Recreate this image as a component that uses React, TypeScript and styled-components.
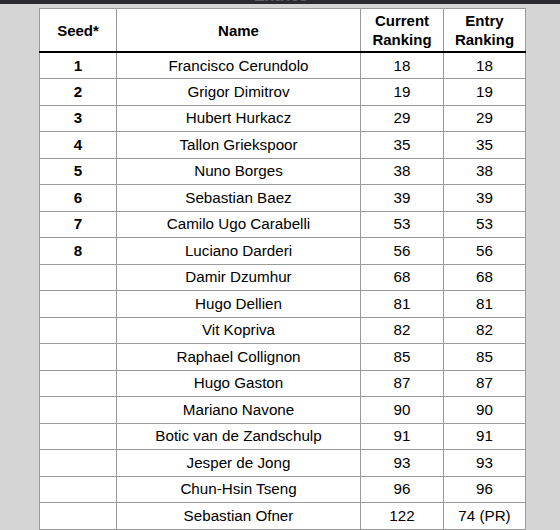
import React from "react";
import styled, { createGlobalStyle } from "styled-components";

const Global = createGlobalStyle`
  html, body { margin: 0; padding: 0; background: #d5d5d5; }
  body { font-family: "Liberation Sans", Arial, sans-serif; overflow: hidden; }
`;

const TopBar = styled.div`
  height: 4px;
  background: #2b2b2f;
  overflow: hidden;
  display: flex;
  justify-content: center;
`;

const TopTitle = styled.span`
  font-size: 16px;
  line-height: 16px;
  margin-top: -12px;
  color: #5e5e62;
  font-weight: bold;
  margin-left: 2px;
`;

const Page = styled.div`
  padding: 4px 0 0 39px;
`;

const Table = styled.table`
  border-collapse: collapse;
  background: #fff;
  width: 483px;
  table-layout: fixed;
  border: 1px solid #9a9a9a;
  font-size: 15.2px;
  color: #000;
`;

const Th = styled.th<{ $w: number }>`
  width: ${(p) => p.$w}px;
  height: 42px;
  padding: 0;
  font-size: 15px;
  font-weight: bold;
  line-height: 19px;
  text-align: center;
  border-right: 1px solid #9a9a9a;
  border-bottom: 2px solid #000;
  vertical-align: middle;
`;

const Tr = styled.tr`
  height: 26.5px;
`;

const Td = styled.td<{ $bold?: boolean }>`
  padding: 0;
  text-align: center;
  vertical-align: middle;
  font-weight: ${(p) => (p.$bold ? "bold" : "normal")};
  border-right: 1px solid #9a9a9a;
  border-bottom: 1px solid #9a9a9a;
  line-height: 16px;
`;

const rows: [string, string, string, string][] = [
  ["1", "Francisco Cerundolo", "18", "18"],
  ["2", "Grigor Dimitrov", "19", "19"],
  ["3", "Hubert Hurkacz", "29", "29"],
  ["4", "Tallon Griekspoor", "35", "35"],
  ["5", "Nuno Borges", "38", "38"],
  ["6", "Sebastian Baez", "39", "39"],
  ["7", "Camilo Ugo Carabelli", "53", "53"],
  ["8", "Luciano Darderi", "56", "56"],
  ["", "Damir Dzumhur", "68", "68"],
  ["", "Hugo Dellien", "81", "81"],
  ["", "Vit Kopriva", "82", "82"],
  ["", "Raphael Collignon", "85", "85"],
  ["", "Hugo Gaston", "87", "87"],
  ["", "Mariano Navone", "90", "90"],
  ["", "Botic van de Zandschulp", "91", "91"],
  ["", "Jesper de Jong", "93", "93"],
  ["", "Chun-Hsin Tseng", "96", "96"],
  ["", "Sebastian Ofner", "122", "74 (PR)"],
];

export default function App() {
  return (
    <>
      <Global />
      <TopBar>
        <TopTitle>Entries</TopTitle>
      </TopBar>
      <Page>
        <Table>
          <thead>
            <tr>
              <Th $w={76}>Seed*</Th>
              <Th $w={243}>Name</Th>
              <Th $w={82}>
                Current
                <br />
                Ranking
              </Th>
              <Th $w={81}>
                Entry
                <br />
                Ranking
              </Th>
            </tr>
          </thead>
          <tbody>
            {rows.map((r, i) => (
              <Tr key={i}>
                <Td $bold>{r[0]}</Td>
                <Td>{r[1]}</Td>
                <Td>{r[2]}</Td>
                <Td>{r[3]}</Td>
              </Tr>
            ))}
          </tbody>
        </Table>
      </Page>
    </>
  );
}
